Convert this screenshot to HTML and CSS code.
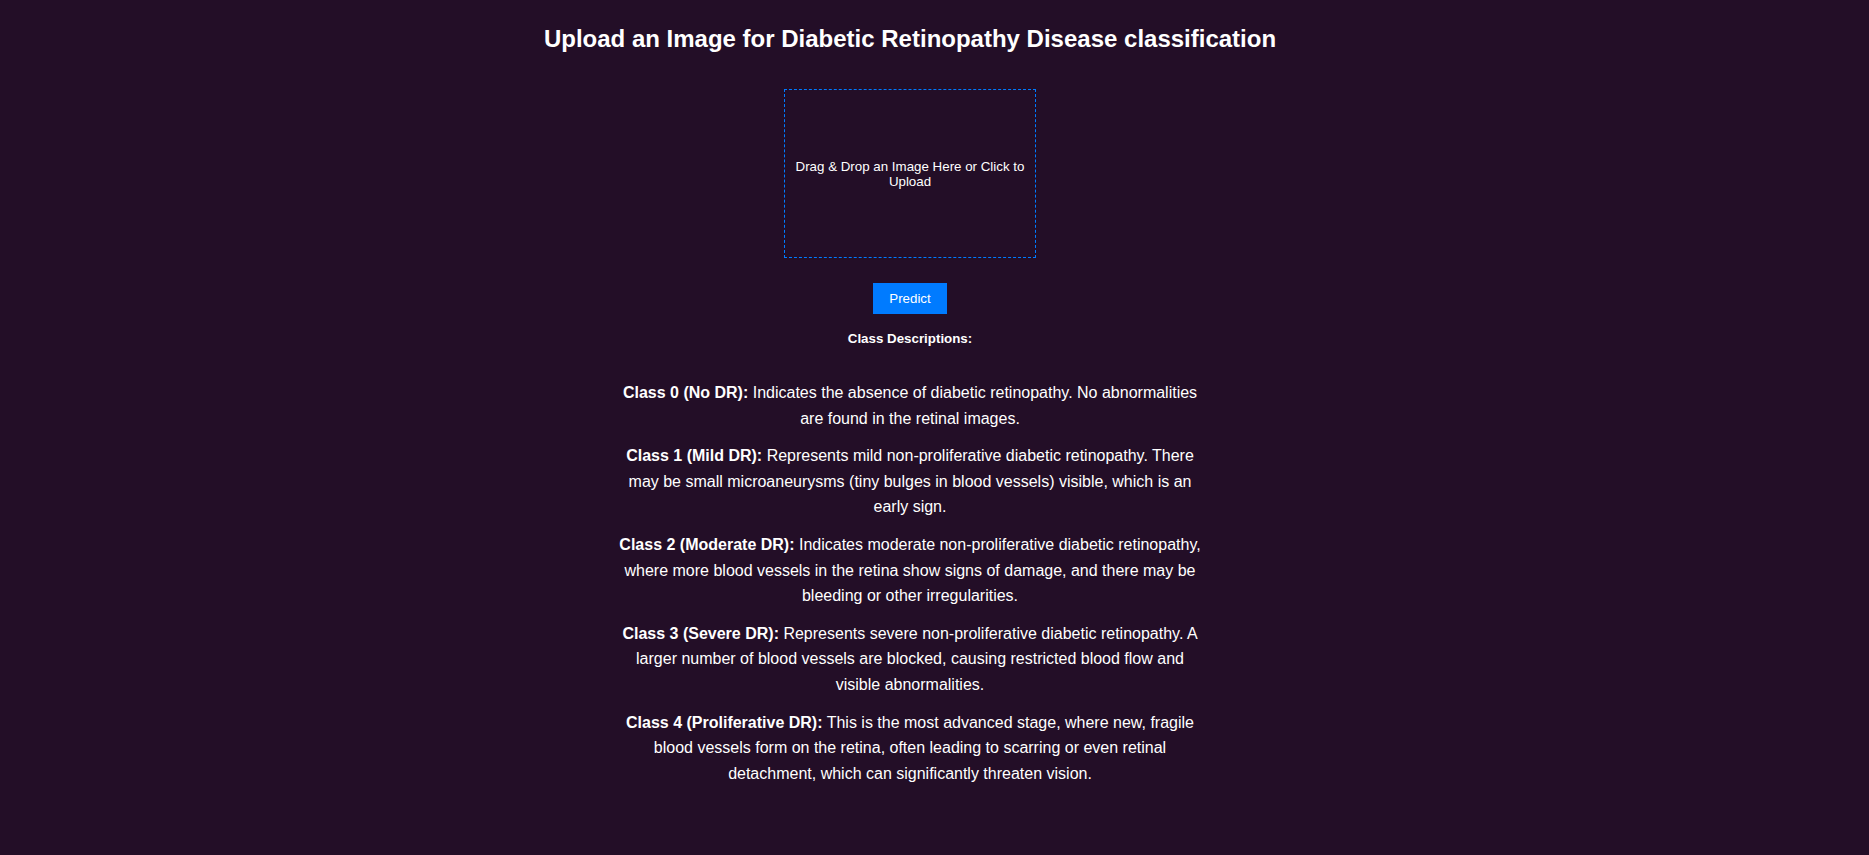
FILE: index.html
```html
<!DOCTYPE html>
<html lang="en">
<head>
<meta charset="utf-8">
<title>Diabetic Retinopathy Classification</title>
<link rel="stylesheet" href="styles.css">
</head>
<body>
<main class="app">
  <h2 class="title">Upload an Image for Diabetic Retinopathy Disease classification</h2>
  <div class="dropzone">
    <p class="dropzone-text">Drag &amp; Drop an Image Here or Click to Upload</p>
  </div>
  <button class="predict-btn" type="button">Predict</button>
  <h5 class="desc-heading">Class Descriptions:</h5>
  <section class="descriptions">
    <p><strong>Class 0 (No DR):</strong> Indicates the absence of diabetic retinopathy. No abnormalities are found in the retinal images.</p>
    <p><strong>Class 1 (Mild DR):</strong> Represents mild non-proliferative diabetic retinopathy. There may be small microaneurysms (tiny bulges in blood vessels) visible, which is an early sign.</p>
    <p><strong>Class 2 (Moderate DR):</strong> Indicates moderate non-proliferative diabetic retinopathy, where more blood vessels in the retina show signs of damage, and there may be bleeding or other irregularities.</p>
    <p><strong>Class 3 (Severe DR):</strong> Represents severe non-proliferative diabetic retinopathy. A larger number of blood vessels are blocked, causing restricted blood flow and visible abnormalities.</p>
    <p><strong>Class 4 (Proliferative DR):</strong> This is the most advanced stage, where new, fragile blood vessels form on the retina, often leading to scarring or even retinal detachment, which can significantly threaten vision.</p>
  </section>
</main>
</body>
</html>
```
FILE: styles.css
```css
html, body {
  margin: 0;
  padding: 0;
  background: #230e27;
}

body {
  font-family: "Liberation Sans", Arial, sans-serif;
  color: #ffffff;
}

.app {
  display: flex;
  flex-direction: column;
  align-items: center;
  text-align: center;
  padding: 25px 49px 40px 0;
}

.title {
  margin: 0 0 36px;
  font-size: 24px;
  font-weight: bold;
  line-height: normal;
}

.dropzone {
  box-sizing: content-box;
  width: 230px;
  height: 147px;
  padding: 10px;
  border: 1px dashed #007bff;
  display: flex;
  align-items: center;
  justify-content: center;
  cursor: pointer;
}

.dropzone-text {
  margin: 0;
  font-size: 13.333px;
  line-height: normal;
}

.predict-btn {
  margin-top: 25px;
  padding: 8px 16px;
  border: none;
  background: #007bff;
  color: #ffffff;
  font-family: "Liberation Sans", Arial, sans-serif;
  font-size: 13.333px;
  line-height: normal;
  cursor: pointer;
}

.desc-heading {
  margin: 17px 0 0;
  font-size: 13.333px;
  font-weight: bold;
  line-height: normal;
}

.descriptions {
  width: 586px;
  margin-top: 22px;
}

.descriptions p {
  margin: 12px 0;
  font-size: 16px;
  line-height: 1.6;
}
```
